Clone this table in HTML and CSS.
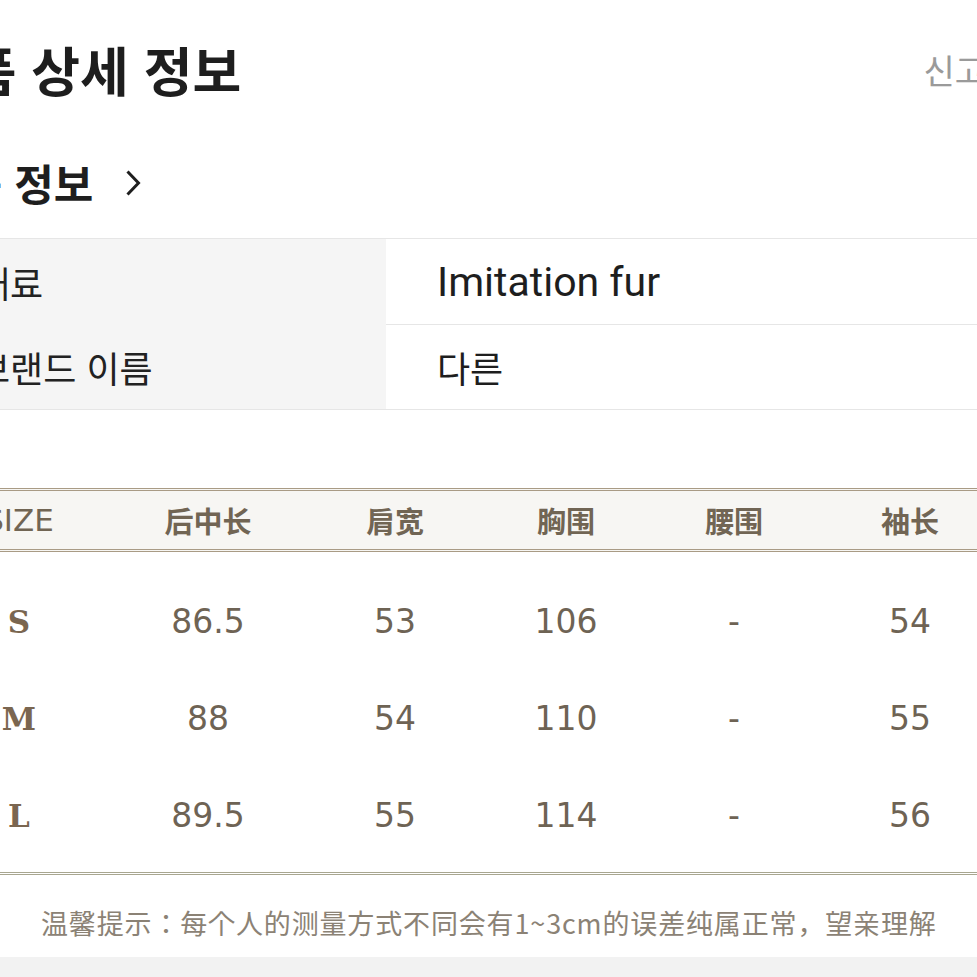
FILE: index.html
```html
<!DOCTYPE html>
<html lang="ko">
<head>
<meta charset="utf-8">
<title>상품 상세 정보</title>
<link rel="stylesheet" href="styles.css">
</head>
<body>
<div class="page">
  <div class="title-row">
    <h1 class="title">상품 상세 정보</h1>
    <span class="report">신고</span>
  </div>
  <div class="section-title">
    <h2>상품 정보</h2>
    <svg class="chev" width="16" height="28" viewBox="0 0 16 28"><path d="M2.5 2.5 L13.5 14 L2.5 25.5" fill="none" stroke="#1e1e1e" stroke-width="3"/></svg>
  </div>
  <div class="spec">
    <div class="spec-label">재료</div>
    <div class="spec-value en first">Imitation fur</div>
    <div class="spec-label">브랜드 이름</div>
    <div class="spec-value">다른</div>
  </div>
  <div class="chart">
    <div class="chart-head">
      <div class="size-head">SIZE</div>
      <div>后中长</div>
      <div>肩宽</div>
      <div>胸围</div>
      <div>腰围</div>
      <div>袖长</div>
    </div>
    <div class="chart-body">
      <div class="chart-row">
        <div class="size-label">S</div>
        <div>86.5</div><div>53</div><div>106</div><div>-</div><div>54</div>
      </div>
      <div class="chart-row">
        <div class="size-label">M</div>
        <div>88</div><div>54</div><div>110</div><div>-</div><div>55</div>
      </div>
      <div class="chart-row">
        <div class="size-label">L</div>
        <div>89.5</div><div>55</div><div>114</div><div>-</div><div>56</div>
      </div>
    </div>
    <p class="note">温馨提示：每个人的测量方式不同会有1~3cm的误差纯属正常，望亲理解</p>
  </div>
  <div class="band"></div>
</div>
</body>
</html>
```

FILE: styles.css
```css
html, body {
  margin: 0;
  padding: 0;
  overflow: hidden;
  background: #ffffff;
}

body {
  font-family: "Noto Sans CJK KR", "Noto Sans", sans-serif;
  color: #1e1e1e;
}

.page {
  margin-left: -77px;
  width: 1100px;
}

.title-row {
  display: flex;
  align-items: center;
  justify-content: space-between;
  height: 94px;
  margin-top: 23px;
  padding-right: 37px;
}

.title {
  margin: 0 0 0 -4px;
  font-size: 53px;
  font-weight: 700;
  line-height: 1.2;
}

.report {
  font-size: 34px;
  color: #9a9a9a;
  line-height: 1.2;
}

.section-title {
  display: flex;
  align-items: center;
  height: 60px;
  margin-top: 36px;
}

.section-title h2 {
  margin: 0;
  font-size: 43px;
  font-weight: 700;
  line-height: 1.2;
}

.chev {
  margin-left: 32px;
  display: block;
}

.spec {
  display: grid;
  grid-template-columns: 463px 1fr;
  grid-template-rows: 86px 84px;
  margin-top: 25px;
  border-top: 1px solid #e6e6e6;
  border-bottom: 1px solid #e6e6e6;
}

.spec-label {
  background: #f5f5f5;
  padding-left: 54px;
  display: flex;
  align-items: center;
  font-size: 36px;
  color: #222222;
}

.spec-value {
  padding-left: 51px;
  display: flex;
  align-items: center;
  font-size: 36px;
  color: #1e1e1e;
  box-sizing: border-box;
}

.spec-value.first {
  border-bottom: 1px solid #e6e6e6;
}

.en {
  font-family: Roboto, "Noto Sans", sans-serif;
  font-size: 41px;
}

.chart {
  margin-top: 78px;
}

.chart-head,
.chart-row {
  display: grid;
  grid-template-columns: 192px 186px 188px 154px 182px 170px;
  align-items: center;
  text-align: center;
}

.chart-head {
  box-sizing: border-box;
  height: 64px;
  background: #f7f6f3;
  border-top: 3px double #a99b85;
  border-bottom: 3px double #a99b85;
  font-family: "Noto Sans CJK SC", sans-serif;
  font-size: 29px;
  font-weight: 700;
  color: #716554;
}

.size-head {
  font-family: "DejaVu Sans", sans-serif;
  font-weight: 400;
  font-size: 31px;
}

.chart-body {
  padding: 21px 0 8px;
  border-bottom: 3px double #a8a690;
}

.chart-row {
  height: 97px;
  font-family: "DejaVu Sans", sans-serif;
  font-size: 33px;
  color: #6e6354;
}

.size-label {
  font-family: "DejaVu Serif", serif;
  font-weight: 700;
  font-size: 31px;
  color: #7a6650;
}

.note {
  margin: 0;
  padding: 30px 0 16px 118px;
  font-family: "Noto Sans CJK SC", sans-serif;
  font-size: 27px;
  letter-spacing: 0.85px;
  line-height: 36px;
  color: #8b8275;
  white-space: nowrap;
}

.band {
  height: 40px;
  background: #f2f2f2;
}
```
